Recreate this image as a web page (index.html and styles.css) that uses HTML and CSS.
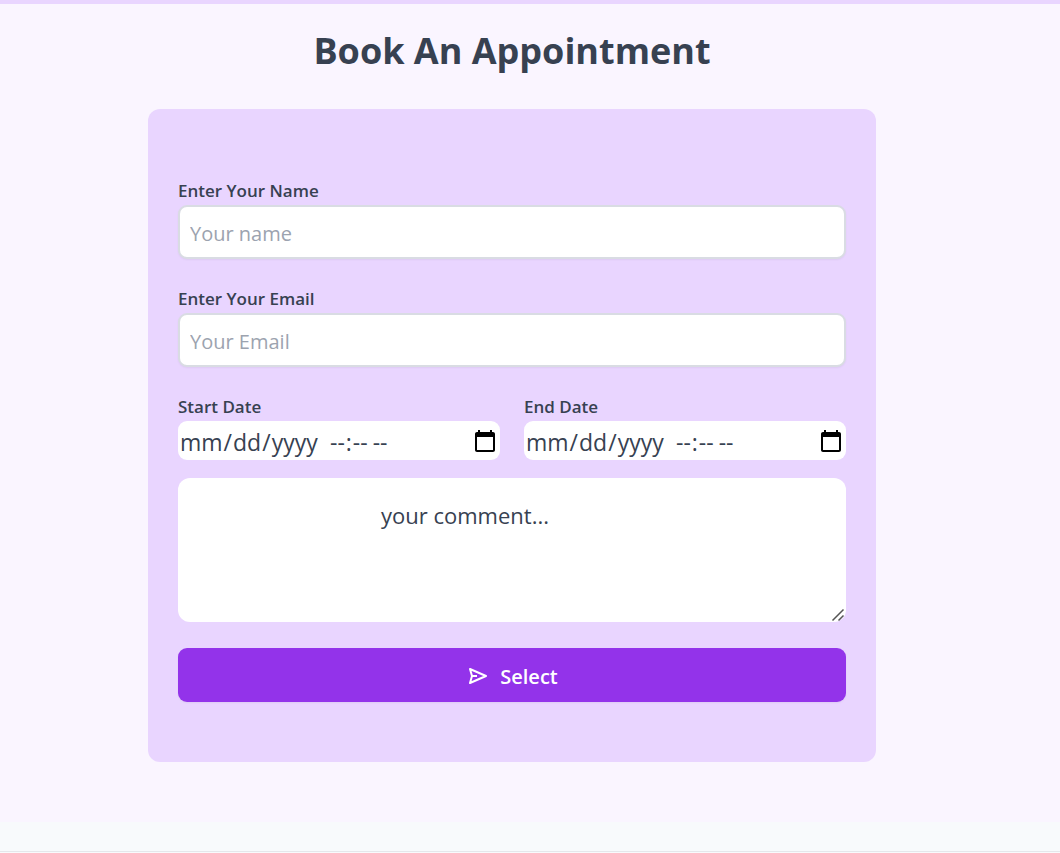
FILE: index.html
```html
<!DOCTYPE html>
<html lang="en">
<head>
    <meta charset="UTF-8">
    <meta name="viewport" content="width=device-width, initial-scale=1.0">
    <title>Book An Appointment</title>
    <link rel="stylesheet" href="styles.css">
</head>
<body>
    <section class="booking">
        <h1>Book An Appointment</h1>

        <form class="booking-form">
            <div class="field">
                <label for="name">Enter Your Name</label>
                <input type="text" id="name" class="text-input" placeholder="Your name">
            </div>
            <div class="field">
                <label for="email">Enter Your Email</label>
                <input type="email" id="email" class="text-input" placeholder="Your Email">
            </div>

            <div class="dates">
                <div>
                    <label for="start">Start Date</label>
                    <div class="date-box">
                        <input type="date" id="start">
                        <input type="time" aria-label="Start time">
                        <button type="button" class="calendar-btn" aria-label="Pick start date" onclick="document.getElementById('start').showPicker()">
                            <svg viewBox="0 0 24 24" fill="currentColor" aria-hidden="true">
                                <path d="M20 3h-1V1h-2v2H7V1H5v2H4c-1.1 0-2 .9-2 2v16c0 1.1.9 2 2 2h16c1.1 0 2-.9 2-2V5c0-1.1-.9-2-2-2zm0 18H4V8h16v13z"/>
                            </svg>
                        </button>
                    </div>
                </div>
                <div>
                    <label for="end">End Date</label>
                    <div class="date-box">
                        <input type="date" id="end">
                        <input type="time" aria-label="End time">
                        <button type="button" class="calendar-btn" aria-label="Pick end date" onclick="document.getElementById('end').showPicker()">
                            <svg viewBox="0 0 24 24" fill="currentColor" aria-hidden="true">
                                <path d="M20 3h-1V1h-2v2H7V1H5v2H4c-1.1 0-2 .9-2 2v16c0 1.1.9 2 2 2h16c1.1 0 2-.9 2-2V5c0-1.1-.9-2-2-2zm0 18H4V8h16v13z"/>
                            </svg>
                        </button>
                    </div>
                </div>
            </div>

            <textarea id="comment" class="comment" aria-label="Comment">your comment...</textarea>

            <button type="button" class="select-btn">
                <svg class="send-icon" viewBox="0 0 20 18" fill="none" stroke="currentColor" stroke-width="2" stroke-linejoin="round" aria-hidden="true">
                    <path d="M2 2 L18 9 L2 16 L4 9 Z"/>
                    <path d="M4 9 H9"/>
                </svg>
                <span>Select</span>
            </button>
        </form>
    </section>
    <footer></footer>
</body>
</html>
```
FILE: styles.css
```css
* {
    box-sizing: border-box;
}
body {
    margin: 0;
    background-color: #f8fafc;
    color: #374151;
    font-family: "Segoe UI", "Open Sans", "Noto Sans", sans-serif;
}
.booking {
    padding: 23px 184px 60px 148px;
    border-top: 4px solid #e9d5ff;
    background-color: #faf5ff;
}
h1 {
    margin: 0 0 34px;
    font-size: 36px;
    line-height: 48px;
    font-weight: bold;
    text-align: center;
}
.booking-form {
    padding: 68px 30px 60px;
    border-radius: 12px;
    background-color: #e9d5ff;
}
label {
    display: block;
    margin-bottom: 1px;
    font-size: 17px;
    line-height: 27px;
    font-weight: 600;
}
.field {
    margin-bottom: 26px;
}
.text-input {
    display: block;
    width: 100%;
    height: 54px;
    padding: 2px 10px 0;
    border: 2px solid #d9dce3;
    border-radius: 9px;
    background-color: white;
    color: #374151;
    font-family: inherit;
    font-size: 20px;
    box-shadow: 0 1px 2px rgba(0, 0, 0, 0.05);
}
.text-input::placeholder {
    color: #9ca3af;
}
/* start and end date side by side */
.dates {
    display: grid;
    grid-template-columns: 1fr 1fr;
    gap: 24px;
    margin-bottom: 18px;
}
.date-box {
    display: flex;
    align-items: center;
    gap: 8px;
    height: 39px;
    padding: 2px 3px 0 1px;
    border-radius: 9px;
    background-color: white;
}
.date-box input {
    flex: none;
    padding: 0;
    border: none;
    background: none;
    color: #374151;
    font-family: inherit;
    font-size: 23px;
}
.date-box input[type="date"] {
    width: 142px;
}
.date-box input::-webkit-calendar-picker-indicator {
    display: none;
}
.calendar-btn {
    flex: none;
    width: 24px;
    height: 24px;
    margin-left: auto;
    margin-bottom: 2px;
    padding: 0;
    border: none;
    background: none;
    color: black;
    cursor: pointer;
}
.calendar-btn svg {
    display: block;
    width: 24px;
    height: 24px;
}
.comment {
    display: block;
    width: 100%;
    height: 144px;
    margin-bottom: 26px;
    padding: 20px 96px 20px 2px;
    border: none;
    border-radius: 12px;
    background-color: white;
    color: #374151;
    font-family: inherit;
    font-size: 22px;
    line-height: 34px;
    text-align: center;
    resize: both;
}
.comment::-webkit-resizer {
    background: url("data:image/svg+xml,%3Csvg xmlns='http://www.w3.org/2000/svg' width='15' height='15'%3E%3Cpath d='M1.5 13.5 L12.5 2.5 M7.5 13.5 L12.5 8.5' stroke='%23555' stroke-width='1.5'/%3E%3C/svg%3E") no-repeat;
}
.select-btn {
    display: flex;
    align-items: center;
    justify-content: center;
    gap: 12px;
    width: 100%;
    height: 54px;
    padding: 2px 0 0 2px;
    border: none;
    border-radius: 9px;
    background-color: #9333ea;
    color: white;
    font-family: inherit;
    font-size: 20px;
    font-weight: 600;
    cursor: pointer;
    box-shadow: 0 1px 2px rgba(0, 0, 0, 0.05);
}
.select-btn:hover {
    background-color: #7e22ce;
}
.send-icon {
    width: 20px;
    height: 18px;
}
footer {
    height: 30px;
    border-bottom: 1px solid #e5e7eb;
}
```
